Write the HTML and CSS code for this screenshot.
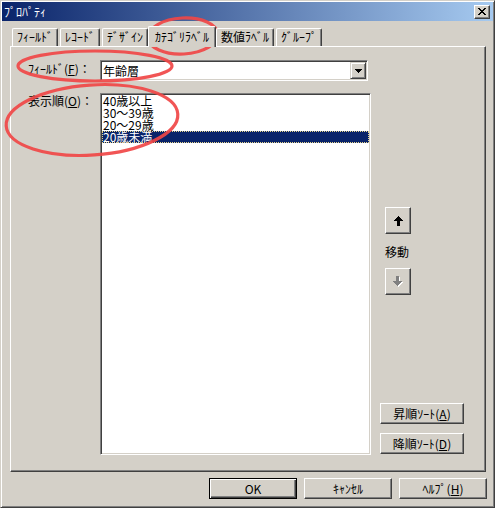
FILE: index.html
```html
<!DOCTYPE html>
<html lang="ja">
<head>
<meta charset="utf-8">
<title>ﾌﾟﾛﾊﾟﾃｨ</title>
<link rel="stylesheet" href="styles.css">
</head>
<body>
<div class="window">
  <div class="titlebar">
    <span class="title">ﾌﾟﾛﾊﾟﾃｨ</span>
    <span class="close">
      <svg width="8" height="7" viewBox="0 0 8 7" shape-rendering="crispEdges">
        <path d="M0 0h2v1h-2z M6 0h2v1h-2z M1 1h2v1h-2z M5 1h2v1h-2z M2 2h4v1h-4z M3 3h2v1h-2z M2 4h4v1h-4z M1 5h2v1h-2z M5 5h2v1h-2z M0 6h2v1h-2z M6 6h2v1h-2z" fill="#000"/>
      </svg>
    </span>
  </div>

  <div class="tabs">
    <div class="tab">ﾌｨｰﾙﾄﾞ</div>
    <div class="tab">ﾚｺｰﾄﾞ</div>
    <div class="tab">ﾃﾞｻﾞｲﾝ</div>
    <div class="tab active">ｶﾃｺﾞﾘﾗﾍﾞﾙ</div>
    <div class="tab">数値ﾗﾍﾞﾙ</div>
    <div class="tab">ｸﾞﾙｰﾌﾟ</div>
  </div>

  <div class="panel">
    <div class="form">
      <div class="lbl lbl-field">ﾌｨｰﾙﾄﾞ(<u>F</u>)：</div>
      <div class="combo">
        <span class="combo-text">年齢層</span>
        <span class="dd">
          <svg width="7" height="4" viewBox="0 0 7 4" shape-rendering="crispEdges">
            <path d="M0 0h7v1h-1v1h-1v1h-1v1h-1v-1h-1v-1h-1v-1h-1z" fill="#000"/>
          </svg>
        </span>
      </div>
      <div></div>

      <div class="lbl lbl-order">表示順(<u>O</u>)：</div>
      <div class="list">
        <div class="item">40歳以上</div>
        <div class="item">30～39歳</div>
        <div class="item">20～29歳</div>
        <div class="item selected">20歳未満</div>
      </div>
      <div class="side">
        <div class="btn arrow up">
          <svg width="9" height="10" viewBox="0 0 9 10" shape-rendering="crispEdges">
            <path d="M4 0h1v1h1v1h1v1h1v1h1v1h-3v5h-3v-5h-3v-1h1v-1h1v-1h1v-1h1z" fill="#000"/>
          </svg>
        </div>
        <div class="move">移動</div>
        <div class="btn arrow down">
          <svg width="10" height="11" viewBox="0 0 10 11" shape-rendering="crispEdges">
            <g transform="translate(1 1)"><path d="M3 0h3v5h3v1h-1v1h-1v1h-1v1h-1v1h-1v-1h-1v-1h-1v-1h-1v-1h-1v-1h3z" fill="#fff"/></g>
            <path d="M3 0h3v5h3v1h-1v1h-1v1h-1v1h-1v1h-1v-1h-1v-1h-1v-1h-1v-1h-1v-1h3z" fill="#808080"/>
          </svg>
        </div>
        <div class="btn sort sort-first">昇順ｿｰﾄ(<u>A</u>)</div>
        <div class="btn sort">降順ｿｰﾄ(<u>D</u>)</div>
      </div>
    </div>
  </div>

  <div class="footer">
    <div class="btn wide default">OK</div>
    <div class="btn wide">ｷｬﾝｾﾙ</div>
    <div class="btn wide">ﾍﾙﾌﾟ(<u>H</u>)</div>
  </div>

  <svg class="marks" width="495" height="508" viewBox="0 0 495 508">
    <g fill="none" stroke="#F04646" stroke-width="3.2" stroke-opacity="0.92">
      <ellipse cx="183" cy="36" rx="35" ry="18" transform="rotate(-3 183 36)"/>
      <ellipse cx="95" cy="66" rx="77" ry="15"/>
      <ellipse cx="92" cy="120" rx="86" ry="35" transform="rotate(-4 92 120)"/>
    </g>
  </svg>
</div>
</body>
</html>
```

FILE: styles.css
```css
* { box-sizing: border-box; }

html, body {
  margin: 0;
  padding: 0;
  background: #D4D0C8;
}

body {
  font-family: "Noto Sans CJK JP", "Liberation Sans", sans-serif;
  font-size: 12px;
  line-height: 12px;
  color: #000;
}

u { text-decoration: underline; text-underline-offset: 1px; }

.window {
  position: relative;
  width: 495px;
  height: 508px;
  background: #D4D0C8;
  border: 1px solid;
  border-color: #D4D0C8 #404040 #404040 #D4D0C8;
  box-shadow: inset 1px 1px #FFFFFF, inset -1px -1px #808080;
  padding: 1px;
  display: flex;
  flex-direction: column;
}

/* title bar */
.titlebar {
  height: 19px;
  display: flex;
  align-items: center;
  background: linear-gradient(to right, #0A246A, #A6CAF0);
  color: #FFFFFF;
  padding-left: 2px;
}

.title {
  line-height: 12px;
}

.close {
  margin-left: auto;
  margin-right: 3px;
  width: 16px;
  height: 14px;
  background: #D4D0C8;
  border: 1px solid;
  border-color: #FFFFFF #404040 #404040 #FFFFFF;
  box-shadow: inset -1px -1px #808080;
  display: flex;
  align-items: center;
  justify-content: center;
}

/* tabs */
.tabs {
  position: relative;
  z-index: 2;
  display: flex;
  align-items: flex-end;
  gap: 2px;
  height: 20px;
  margin: 5px 7px 0 8px;
  padding-left: 2px;
}

.tab {
  height: 18px;
  padding: 0 4px;
  line-height: 16px;
  background: #D4D0C8;
  border-top: 1px solid #FFFFFF;
  border-left: 1px solid #FFFFFF;
  border-right: 1px solid #404040;
  box-shadow: inset -1px 0 #808080;
  border-radius: 2px 2px 0 0;
  white-space: nowrap;
}

.tab.active {
  height: 21px;
  margin: 0 -2px -1px;
  padding: 2px 6px 0;
}

/* panel */
.panel {
  margin: 0 7px 0 8px;
  height: 426px;
  border: 1px solid;
  border-color: #FFFFFF #404040 #404040 #FFFFFF;
  box-shadow: inset -1px -1px #808080;
  padding: 13px 21px 16px 16px;
}

.form {
  display: grid;
  grid-template-columns: 64px 271px 84px;
  grid-template-rows: 21px 362px;
  column-gap: 9px;
  row-gap: 12px;
}

.lbl {
  white-space: nowrap;
  line-height: 12px;
}

.lbl-field { padding-top: 3px; padding-left: 1px; }
.lbl-order { padding-top: 2px; padding-left: 1px; }

/* combo */
.combo {
  width: 268px;
  height: 21px;
  background: #FFFFFF;
  border: 1px solid;
  border-color: #808080 #FFFFFF #FFFFFF #808080;
  box-shadow: inset 1px 1px #404040, inset -1px -1px #D4D0C8;
  padding: 1px;
  display: flex;
  align-items: center;
}

.combo-text {
  padding-left: 1px;
  line-height: 12px;
}

.dd {
  margin-left: auto;
  width: 16px;
  height: 17px;
  background: #D4D0C8;
  border: 1px solid;
  border-color: #D4D0C8 #404040 #404040 #D4D0C8;
  box-shadow: inset 1px 1px #FFFFFF, inset -1px -1px #808080;
  display: flex;
  align-items: center;
  justify-content: center;
}

/* list */
.list {
  background: #FFFFFF;
  border: 1px solid;
  border-color: #808080 #FFFFFF #FFFFFF #808080;
  box-shadow: inset 1px 1px #404040, inset -1px -1px #D4D0C8;
  padding: 1px;
}

.item {
  line-height: 12px;
  padding-left: 1px;
  white-space: nowrap;
}

.item.selected {
  background: #0A246A;
  color: #FFFFFF;
  outline: 1px dotted #E6D48C;
  outline-offset: -1px;
}

/* side column */
.side {
  display: flex;
  flex-direction: column;
  align-items: flex-start;
}

.btn {
  background: #D4D0C8;
  border: 1px solid;
  border-color: #FFFFFF #404040 #404040 #FFFFFF;
  box-shadow: inset -1px -1px #808080;
  display: flex;
  align-items: center;
  justify-content: center;
  white-space: nowrap;
  line-height: 12px;
}

.arrow {
  width: 26px;
  height: 27px;
  margin-left: 5px;
}

.up { margin-top: 114px; }

.move {
  margin-top: 12px;
  margin-left: 5px;
  line-height: 12px;
}

.down { margin-top: 10px; }

.sort {
  width: 84px;
  height: 21px;
}

.sort-first { margin-top: auto; margin-bottom: 9px; }
.sort:last-child { margin-bottom: 1px; }

/* footer */
.footer {
  display: flex;
  justify-content: flex-end;
  gap: 7px;
  margin-top: 6px;
  padding-right: 6px;
}

.wide {
  width: 88px;
  height: 21px;
}

.default {
  border: 1px solid #000000;
  box-shadow: inset 1px 1px #FFFFFF, inset -1px -1px #404040, inset -2px -2px #808080;
}

/* annotation overlay */
.marks {
  position: absolute;
  top: -1px;
  left: -1px;
  pointer-events: none;
}
```
